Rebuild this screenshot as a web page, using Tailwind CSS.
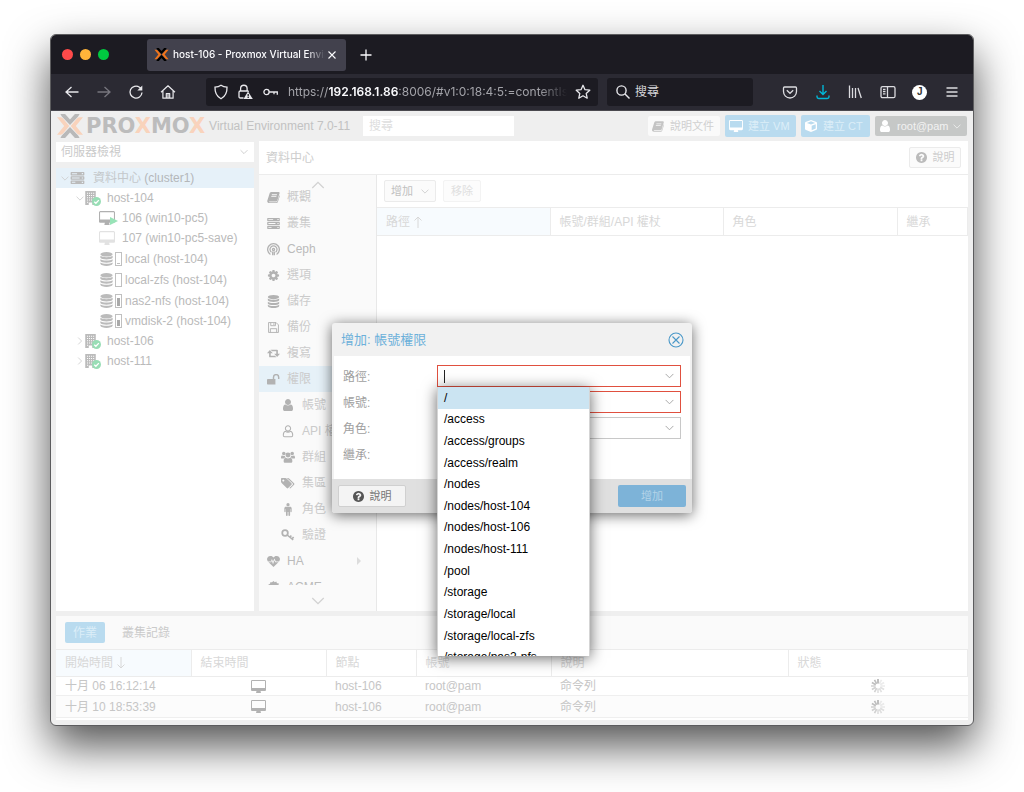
<!DOCTYPE html>
<html lang="zh-Hant">
<head>
<meta charset="utf-8">
<title>host-106 - Proxmox Virtual Environment</title>
<meta name="viewport" content="width=device-width, initial-scale=1">
<script src="https://cdn.jsdelivr.net/npm/@tailwindcss/browser@4"></script>
</head>
<body class="flex h-screen flex-col overflow-hidden bg-white px-[50px] pt-[34px] pb-[66px] font-['Liberation_Sans','Noto_Sans_CJK_TC',sans-serif] text-xs text-[#b8b8b8]">

<svg class="hidden" aria-hidden="true">
  <symbol id="user" viewBox="0 0 1792 1792"><path d="M1536 1399q0 109-62.5 187t-150.5 78h-854q-88 0-150.5-78t-62.5-187q0-85 8.5-160.5t31.5-152 58.5-131 94-89 134.5-34.5q131 128 313 128t313-128q76 0 134.5 34.5t94 89 58.5 131 31.5 152 8.5 160.5zm-256-887q0 159-112.5 271.5t-271.5 112.5-271.5-112.5-112.5-271.5 112.5-271.5 271.5-112.5 271.5 112.5 112.5 271.5z"/></symbol>
  <symbol id="usero" viewBox="0 0 1792 1792"><path fill="none" stroke="currentColor" stroke-width="130" d="M1500 1440q0 200-170 200h-868q-170 0-170-200q0-420 290-500q130 100 314 100t314-100q290 80 290 500zM1230 560q0 140-97 237t-237 97-237-97-97-237 97-237 237-97 237 97 97 237z"/></symbol>
  <symbol id="cog" viewBox="0 0 1792 1792"><path d="M1152 896q0-106-75-181t-181-75-181 75-75 181 75 181 181 75 181-75 75-181zm512-109v222q0 12-8 23t-20 13l-185 28q-19 54-39 91 35 50 107 138 10 12 10 25t-9 23q-27 37-99 108t-94 71q-12 0-26-9l-138-108q-44 23-91 38-16 136-29 186-7 28-36 28h-222q-14 0-24.500-8.500t-11.500-21.500l-28-184q-49-16-90-37l-141 107q-10 9-25 9-14 0-25-11-126-114-165-168-7-10-7-23 0-12 8-23 15-21 51-66.500t54-70.500q-27-50-41-99l-183-27q-13-2-21-12.500t-8-23.500v-222q0-12 8-23t19-13l186-28q14-46 39-92-40-57-107-138-10-12-10-24 0-10 9-23 26-36 98.500-107.500t94.500-71.500q13 0 26 10l138 107q44-23 91-38 16-136 29-186 7-28 36-28h222q14 0 24.500 8.500t11.500 21.500l28 184q49 16 90 37l142-107q9-9 24-9 13 0 25 10 129 119 165 170 7 8 7 22 0 12-8 23-15 21-51 66.500t-54 70.500q26 50 41 98l183 28q13 2 21 12.500t8 23.500z"/></symbol>
  <symbol id="desktop" viewBox="-64 0 1920 1664"><path d="M1728 992v-832q0-13-9.500-22.500t-22.500-9.500h-1600q-13 0-22.500 9.500t-9.500 22.500v832q0 13 9.500 22.500t22.500 9.500h1600q13 0 22.500-9.500t9.500-22.500zm128-832v1088q0 66-47 113t-113 47h-544q0 37 16 77.500t32 71 16 43.500q0 26-19 45t-45 19h-512q-26 0-45-19t-19-45q0-14 16-44t32-70 16-78h-544q-66 0-113-47t-47-113v-1088q0-66 47-113t113-47h1600q66 0 113 47t47 113z"/></symbol>
  <symbol id="help" viewBox="128 128 1536 1536"><path d="M1024 1376v-192q0-14-9-23t-23-9h-192q-14 0-23 9t-9 23v192q0 14 9 23t23 9h192q14 0 23-9t9-23zm256-672q0-88-55.500-163t-138.500-116-170-41q-243 0-371 213-15 24 8 42l132 100q7 6 19 6 16 0 25-12 53-68 86-92 34-24 86-24 48 0 85.500 26t37.500 59q0 38-20 61t-68 45q-63 28-115.500 86.500t-52.500 125.500v36q0 14 9 23t23 9h192q14 0 23-9t9-23q0-19 21.500-49.500t54.500-49.500q32-18 49-28.500t46-35 44.500-48 28-60.500 12.500-81zm384 192q0 209-103 385.500t-279.500 279.500-385.500 103-385.500-103-279.500-279.500-103-385.500 103-385.500 279.500-279.500 385.500-103 385.500 103 279.500 279.500 103 385.500z"/></symbol>
  <symbol id="server" viewBox="0 0 16 14"><path fill-rule="evenodd" d="M.5 0h15l.5.5v3l-.5.5H.5L0 3.500v-3zM.5 5h15l.5.5v3l-.5.5H.5L0 8.500v-3zM.5 10h15l.5.5v3l-.5.5H.5l-.5-.5v-3zM1.500 1.500v1h6v-1zM1.500 6.500v1h9v-1zM1.500 11.500v1h4v-1zM13 1.300v1.400h1.500V1.300zM13 6.300v1.400h1.500V6.300zM13 11.300v1.400h1.500v-1.400z"/></symbol>
  <symbol id="building" viewBox="0 0 14 16"><path fill-rule="evenodd" d="M1 0h12v16H9v-3H5v3H1zM3 2v1h1.200V2zM5.300 2v1h1.200V2zM7.600 2v1h1.200V2zM10 2v1h1.200V2zM3 4.600v1h1.200v-1zM5.300 4.600v1h1.200v-1zM7.600 4.600v1h1.200v-1zM10 4.600v1h1.200v-1zM3 7.200v1h1.200v-1zM5.300 7.200v1h1.200v-1zM7.600 7.200v1h1.200v-1zM10 7.200v1h1.200v-1zM3 9.800v1h1.200v-1zM5.300 9.800v1h1.200v-1zM7.600 9.800v1h1.200v-1zM3 12.400v1h1.200v-1z"/></symbol>
  <symbol id="check" viewBox="0 0 10 10"><circle cx="5" cy="5" r="5"/><path d="M2.500 5.200 4.300 7l3.300-3.600" fill="none" stroke="#fff" stroke-width="1.400"/></symbol>
  <symbol id="db" viewBox="0 0 14 16"><ellipse cx="7" cy="2.600" rx="7" ry="2.600"/><path d="M0 4.400c2 2 12 2 14 0v2.200c-1 2.600-13 2.600-14 0zM0 8.200c2 2 12 2 14 0v2.200c-1 2.600-13 2.600-14 0zM0 12c2 2 12 2 14 0v1.500c-1 3.300-13 3.300-14 0z"/></symbol>
  <symbol id="book" viewBox="0 0 16 14"><path fill-rule="evenodd" d="M5.500 0h9c1 0 1.500.7 1.200 1.600L12.800 11c-.2.700-.8 1-1.500 1H3c-.8 0-.8.9 0 .9h8.800c.7 0 1-.3 1.200-1L15.600 4c.5.300.5.800.3 1.400l-2.300 7.400c-.3.800-1 1.200-1.800 1.200H2.500C.8 14-.4 12.400.2 10.800L3 1.800C3.400.7 4.300 0 5.500 0zM6 3l-.3 1h6.500l.3-1zM5.300 5.400l-.3 1h6.500l.3-1z"/></symbol>
  <symbol id="ceph" viewBox="0 0 16 16"><g fill="none" stroke="currentColor" stroke-width="1.600"><path d="M4.200 14.200A7.200 7.200 0 1 1 11.800 14.200M5.500 11.400A4.300 4.300 0 1 1 10.500 11.400"/><circle cx="8" cy="8" r="1.300"/><path d="M7 10.500v4.700M9 10.500v4.700"/></g></symbol>
  <symbol id="floppy" viewBox="0 0 14 14"><path fill="none" stroke="currentColor" stroke-width="1.200" d="M.7.700h9.600l3 3v9.600H.7zM3.500.7v4h6v-4M3 13.300V8.500h8v4.800M7.500 1.500v2.300"/></symbol>
  <symbol id="retweet" viewBox="0 0 18 12"><path d="M4 1 8 5.500H5.200V9H11l2 2.300H4.200c-.8 0-1.300-.4-1.300-1.200V5.500H0zM14 11l-4-4.500h2.800V3H7L5 .7h8.800c.8 0 1.300.4 1.300 1.200v4.600H18z"/></symbol>
  <symbol id="unlock" viewBox="0 0 17 14"><path d="M1 6.500h10v7.200H1c-.6 0-1-.4-1-1V7.500c0-.6.400-1 1-1z"/><path d="M8.500 7V4a3.200 3.200 0 0 1 6.800 0v2.500" fill="none" stroke="currentColor" stroke-width="1.900"/></symbol>
  <symbol id="users" viewBox="0 0 18 15"><circle cx="3.600" cy="3" r="2.300"/><circle cx="14.400" cy="3" r="2.300"/><circle cx="9" cy="5" r="3.200"/><path d="M1.300 5.500Q3 6.400 5 6q.2 1.600 1 2.300Q4 8.600 3.600 9.500H1.200C0 9.500 0 8.800 0 8s.4-2.500 1.300-2.500zM16.700 5.500Q15 6.400 13 6q-.2 1.600-1 2.300 2 .3 2.400 1.200h2.400C18 9.500 18 8.800 18 8s-.4-2.500-1.300-2.500zM6.300 8.600q2.700 1.400 5.400 0c2 0 2.900 2 2.900 4.400 0 1.300-.8 2-1.900 2H5.300c-1.100 0-1.900-.7-1.900-2 0-2.400.9-4.400 2.900-4.400z"/></symbol>
  <symbol id="tags" viewBox="0 0 18 14"><path fill-rule="evenodd" d="M1 0h4.500c.8 0 1.400.3 2 .8l6 6c.6.600.6 1.200 0 1.800l-4.300 4.300c-.6.600-1.200.6-1.800 0l-6-6C.6 6 0 5.400 0 4.600V1c0-.6.400-1 1-1zM3 1.800a1.300 1.300 0 1 0 .01 0z"/><path d="M7.500 0h1.300c.8 0 1.500.3 2 .8l6 6c.7.600.7 1.200 0 1.800l-4.200 4.300c-.7.600-1.300.5-1.800 0l4-4c.8-.8.800-1.500 0-2.300z"/></symbol>
  <symbol id="male" viewBox="0 0 10 16"><circle cx="5" cy="2" r="2"/><path d="M2.500 4.500h5c1.300 0 2 .8 2 2v4c0 1-1.500 1-1.500 0v-3h-.4v7.600c0 1.100-2.100 1.100-2.100 0V11h-.9v4.100c0 1.100-2.100 1.100-2.100 0V7.500h-.4v3c0 1-1.600 1-1.600 0v-4c0-1.200.7-2 2-2z"/></symbol>
  <symbol id="key" viewBox="0 0 17 15"><g fill="none" stroke="currentColor"><circle cx="4.800" cy="5" r="3.500" stroke-width="2.200"/><path stroke-width="2" d="m7.500 7.500 7.500 6M11 10.500l1.600-2.300M13.500 12.500l2-2.600"/></g></symbol>
  <symbol id="heart" viewBox="0 0 18 16"><path d="M9 16 1.800 9h4l.8-2 1.700 5 2-6 1.200 3h4.700zM.9 8A4.800 4.800 0 0 1 4.800 0C6.700 0 8 1 9 2.200 10 1 11.300 0 13.200 0A4.800 4.800 0 0 1 17.100 8h-4.800l-2-4.500-2 5L6.700 4.200 5.200 8z"/></symbol>
  <symbol id="cert" viewBox="0 0 16 16"><path d="m8 0 1.700 1.500L11.800.7l.8 2.200 2.300.2-.1 2.300L16.500 7 15 8.800l.7 2.200-2.200.8-.3 2.300-2.300-.1L9 15.700 7.200 14l-2.200.8-.8-2.200-2.300-.3.200-2.300L.3 8.500 2 6.800 1.200 4.600l2.200-.8.300-2.300 2.300.2z"/></symbol>
  <symbol id="cube" viewBox="0 0 16 16"><path fill-rule="evenodd" d="M8 0l7.300 2.800.7 1V12l-.6 1L8 16 .6 13 0 12V3.800l.7-1zm0 1.700L2.500 3.900 8 6l5.500-2.100zM8.900 7.500v6.300l5.400-2.400V5.500z"/></symbol>
  <symbol id="down" viewBox="0 0 10 6"><path d="m.7.700 4.300 4.300L9.300.7" fill="none" stroke="currentColor"/></symbol>
  <symbol id="right" viewBox="0 0 6 10"><path d="m.7.700 4.300 4.300L.7 9.300" fill="none" stroke="currentColor"/></symbol>
  <symbol id="mark" viewBox="0 0 26 24"><g fill="currentColor"><path d="M3.500 0h4.600L13 5.400 17.900 0h4.600c-.5 1.400-1.200 2.300-2.300 3.500L13 11 5.800 3.500C4.700 2.300 4 1.400 3.500 0zM3.500 24h4.600l4.900-5.400 4.900 5.400h4.600c-.5-1.400-1.200-2.300-2.300-3.500L13 13l-7.200 7.500c-1.100 1.200-1.800 2.100-2.300 3.500z"/></g><path fill="var(--x)" d="M0 3.300h2.700c1.500 0 2.400.4 3.300 1.300L12.300 12 6 19.400c-.9.900-1.800 1.300-3.300 1.300H0L7.200 12zM26 3.300h-2.700c-1.500 0-2.400.4-3.300 1.300L13.700 12l6.300 7.400c.9.900 1.800 1.300 3.300 1.300H26L18.800 12z"/></symbol>
  <symbol id="spin" viewBox="0 0 14 14"><g fill="none" stroke="#b4b4b4" stroke-width="1.700"><path d="M7 0v4.500"/><path opacity=".25" d="M10.500.9 8.300 4.800M13.100 3.500 9.200 5.700M14 7H9.500"/><path opacity=".4" d="m13.100 10.500-3.900-2.200M10.500 13.100 8.300 9.200M7 14V9.500"/><path opacity=".6" d="m3.500 13.100 2.200-3.900M.9 10.500l3.900-2.200M0 7h4.500"/><path opacity=".85" d="m.9 3.500 3.900 2.200M3.500.9l2.200 3.900"/></g></symbol>
</svg>

<div class="flex min-h-0 flex-1 flex-col overflow-hidden rounded-md border border-[#5c5c5e] bg-[#efefef] shadow-[0_20px_44px_rgba(0,0,0,0.68)]">

  <!-- Tab strip -->
  <div class="flex h-[39px] shrink-0 items-center bg-[#1c1b22] text-[#fbfbfe]">
    <div class="flex w-24 gap-[7px] pl-[11px]">
      <button aria-label="關閉" class="size-[11px] rounded-full bg-[#ff4a4a]"></button>
      <button aria-label="最小化" class="size-[11px] rounded-full bg-[#ffb43a]"></button>
      <button aria-label="最大化" class="size-[11px] rounded-full bg-[#00c940]"></button>
    </div>
    <div class="flex h-8 w-[199px] items-center rounded-[3px] bg-[#42414d] pr-2 pl-[7px]">
      <svg class="h-[13px] w-[15px] shrink-0 text-black [--x:#f0741a]"><use href="#mark"/></svg>
      <span class="ml-1 flex-1 overflow-hidden font-['Inter','Noto_Sans_CJK_TC',sans-serif] text-[10px] font-medium whitespace-nowrap [mask-image:linear-gradient(to_right,black_88%,transparent)]">host-106 - Proxmox Virtual Environment</span>
      <button aria-label="關閉分頁" class="ml-px flex size-3 items-center justify-center"><svg class="size-2" viewBox="0 0 8 8"><path d="m.5.500 7 7m0-7-7 7" stroke="currentColor" stroke-width="1.100"/></svg></button>
    </div>
    <button aria-label="新分頁" class="ml-3 flex size-4 items-center justify-center"><svg class="size-3" viewBox="0 0 12 12"><path d="M6 .5v11M.5 6h11" stroke="currentColor" stroke-width="1.300"/></svg></button>
  </div>

  <!-- Navigation toolbar -->
  <div class="flex h-[37px] shrink-0 items-center border-b border-[#4a494f] bg-[#2b2a33] px-3 text-[#e8e8ec]">
    <div class="flex w-[143px] items-center gap-4 pl-px">
      <button aria-label="上一頁"><svg class="size-4" viewBox="0 0 16 16" fill="none" stroke="currentColor" stroke-width="1.300"><path d="M14.500 8H2m5.500-5L2 8l5.500 5"/></svg></button>
      <button aria-label="下一頁" class="text-[#77767e]"><svg class="size-4" viewBox="0 0 16 16" fill="none" stroke="currentColor" stroke-width="1.300"><path d="M1.500 8H14M8.500 3 14 8l-5.500 5"/></svg></button>
      <button aria-label="重新載入"><svg class="size-4" viewBox="0 0 16 16" fill="none" stroke="currentColor" stroke-width="1.300"><path d="M14 8.500A6 6 0 1 1 11.500 3.200L13 4.600"/><path d="M14.300 1.500v5h-5z" fill="currentColor" stroke="none"/></svg></button>
      <button aria-label="首頁"><svg class="size-4" viewBox="0 0 16 16" fill="none" stroke="currentColor" stroke-width="1.200" stroke-linejoin="round"><path d="m1 8.200 7-6.400 7 6.400M2.900 6.800v7.400h10.200V6.800M6.300 14v-4.500h3.400V14M8 9.500V14"/></svg></button>
    </div>
    <div class="flex h-7 min-w-0 flex-1 items-center rounded-[3px] bg-[#1c1b22] px-[7px]">
      <svg class="size-4 shrink-0" viewBox="0 0 16 16" fill="none" stroke="currentColor" stroke-width="1.300"><path d="M8 1.300c1.700 1.200 3.700 1.800 6 1.900.2 5-1.500 9-6 11.500C3.500 12.200 1.800 8.200 2 3.200c2.300-.1 4.300-.7 6-1.900z"/></svg>
      <svg class="ml-2 size-4 shrink-0" viewBox="0 0 16 16" fill="none" stroke="currentColor" stroke-width="1.300"><path d="M6.500 14H3.300c-.8 0-1.300-.5-1.300-1.300V8.300C2 7.500 2.500 7 3.300 7h7.400l1 .6M3.600 7V4.500a3.200 3.200 0 0 1 6.500 0V7"/><path fill="currentColor" stroke="none" d="M11 7.500 15.800 15H6.500z"/><path stroke="#1c1b22" d="M11.200 10v2.500m0 .6v1"/></svg>
      <svg class="mx-[10px] h-2 w-[15px] shrink-0" viewBox="0 0 15 8" fill="none" stroke="currentColor" stroke-width="1.300"><circle cx="3.500" cy="4" r="2.600"/><path d="M6 4h8.300v2.800M11 4v2.200"/></svg>
      <div class="min-w-0 flex-1 overflow-hidden font-['Inter',sans-serif] text-xs whitespace-nowrap text-[#a3a3a9] [mask-image:linear-gradient(to_right,black_90%,transparent)]">https://<b class="font-semibold text-[#fbfbfe]">192.168.1.86</b>:8006/#v1:0:18:4:5:=contentIso</div>
      <button aria-label="加入書籤" class="ml-2 shrink-0"><svg class="size-4" viewBox="0 0 16 16" fill="none" stroke="currentColor" stroke-width="1.300" stroke-linejoin="round"><path d="m8 1.300 2 4.400 4.800.5-3.600 3.200 1 4.800L8 11.800l-4.200 2.400 1-4.800L1.200 6.200 6 5.700z"/></svg></button>
    </div>
    <label class="ml-[9px] flex h-7 w-[146px] items-center gap-1 rounded-[3px] bg-[#1c1b22] px-2">
      <svg class="size-4 shrink-0" viewBox="0 0 16 16" fill="none" stroke="currentColor" stroke-width="1.400"><circle cx="6.500" cy="6.500" r="4.600"/><path d="m10 10 4.500 4.500"/></svg>
      <input aria-label="搜尋網頁" placeholder="搜尋" class="w-full min-w-0 bg-transparent text-xs outline-none placeholder:text-[#d5d5d9]">
    </label>
    <div class="flex w-[208px] items-center justify-between pr-px pl-[29px] text-[#dcdce0]">
      <button aria-label="Pocket"><svg class="size-4" viewBox="0 0 16 16" fill="none" stroke="currentColor" stroke-width="1.300"><path d="M2.500 3h11c.6 0 1 .4 1 1v3.500a6.500 6.500 0 0 1-13 0V4c0-.6.400-1 1-1z"/><path d="m4.800 6.300 3.200 3 3.200-3"/></svg></button>
      <button aria-label="下載" class="text-[#00b8d8]"><svg class="size-4" viewBox="0 0 16 16" fill="none" stroke="currentColor" stroke-width="1.400"><path d="M8 1v9.500M4.500 7 8 10.500 11.500 7M2 11.500v1.300c0 1 .7 1.700 1.700 1.700h8.600c1 0 1.700-.7 1.700-1.700v-1.300"/></svg></button>
      <button aria-label="我的書庫"><svg class="size-4" viewBox="0 0 16 16" fill="none" stroke="currentColor" stroke-width="1.300"><path d="M2.500 1.500V14M5.500 4v10M8.500 4v10M11 4l3.300 10"/></svg></button>
      <button aria-label="側邊欄"><svg class="size-4" viewBox="0 0 16 16" fill="none" stroke="currentColor" stroke-width="1.300"><rect x="1" y="2.700" width="14" height="11" rx="1.500"/><path d="M7.500 3v10.500M3 5.500h2.500M3 7.700h2.500M3 9.900h2.500"/></svg></button>
      <button aria-label="帳戶" class="flex size-[15px] items-center justify-center rounded-full bg-white text-[10px] font-bold text-[#333]">J</button>
      <button aria-label="選單"><svg class="size-4" viewBox="0 0 16 16" stroke="currentColor" stroke-width="1.300"><path d="M2.500 4h11M2.500 8h11M2.500 12h11"/></svg></button>
    </div>
  </div>

  <!-- Application -->
  <div class="relative flex min-h-0 flex-1 flex-col px-[5px] pb-[5px]">
    <header class="flex h-[30px] shrink-0 items-center">
      <svg class="mr-[3px] ml-px h-6 w-[26px] shrink-0 text-[#b9b9b9] [--x:#f9d3bc]"><use href="#mark"/></svg>
      <span class="font-['DejaVu_Sans',sans-serif] text-[21px] leading-6 font-bold text-[#bcbcbc]">PRO<span class="text-[#f9d3bc]">X</span>MO<span class="text-[#f9d3bc]">X</span></span>
      <span class="ml-1 w-[154px] text-xs whitespace-nowrap text-[#c2c2c2]">Virtual Environment 7.0-11</span>
      <input aria-label="搜尋" placeholder="搜尋" class="h-5 w-[151px] bg-white px-[6px] outline-none placeholder:text-[#dedede]">
      <div class="ml-auto flex items-center gap-[5px] pr-px text-[11px]">
        <button class="flex h-5 w-[72px] items-center gap-[6px] rounded-[2px] bg-[#fafafa] px-1 whitespace-nowrap text-[#d0d0d0]"><svg class="h-[11px] w-3 shrink-0 fill-[#c4c4c4]"><use href="#book"/></svg>說明文件</button>
        <button class="flex h-[22px] w-[71px] items-center gap-[5px] rounded-[2px] bg-[#b9dbef] px-1 whitespace-nowrap text-[#dceef8]"><svg class="h-3 w-[14px] shrink-0 fill-white"><use href="#desktop"/></svg>建立 VM</button>
        <button class="flex h-[22px] w-[69px] items-center gap-[6px] rounded-[2px] bg-[#b9dbef] px-1 whitespace-nowrap text-[#dceef8]"><svg class="size-3 shrink-0 fill-white"><use href="#cube"/></svg>建立 CT</button>
        <button class="flex h-5 w-[92px] items-center rounded-[2px] bg-[#c6c8c7] px-[3px] pr-[6px] whitespace-nowrap text-[#f2f2f2]"><svg class="mr-[5px] size-[14px] shrink-0 fill-white"><use href="#user"/></svg>root@pam<svg class="ml-auto h-[5px] w-2 shrink-0"><use href="#down"/></svg></button>
      </div>
    </header>

    <div class="flex min-h-0 flex-1 gap-[5px]">
      <!-- Resource tree -->
      <aside class="flex w-[198px] shrink-0 flex-col gap-[6px] pt-px">
        <div class="relative h-5 shrink-0 bg-white">
          <select aria-label="檢視" class="size-full appearance-none bg-transparent pl-[5px] text-[#cacaca] outline-none"><option>伺服器檢視</option></select>
          <svg class="pointer-events-none absolute top-[7px] right-[6px] h-[6px] w-2 text-[#c4c4c4]"><use href="#down"/></svg>
        </div>
        <ul class="flex-1 overflow-hidden bg-white text-[#bababa]" role="tree">
          <li class="flex h-5 items-center bg-[#e6f1f9] pl-[5px]"><svg class="h-[5px] w-2 text-[#ccc]"><use href="#down"/></svg><svg class="mr-2 ml-px h-3 w-[15px] fill-[#bbb]"><use href="#server"/></svg><span class="text-[#c4c8cb]">資料中心 <span class="text-[#b4b7b9]">(cluster1)</span></span></li>
          <li class="flex h-5 items-center pl-5"><svg class="h-[5px] w-2 text-[#ccc]"><use href="#down"/></svg><span class="relative mr-[6px] h-[14px] w-[17px]"><svg class="h-[14px] w-[13px] fill-[#bbb]"><use href="#building"/></svg><svg class="absolute right-0 -bottom-px size-[9px] fill-[#98ddb5]"><use href="#check"/></svg></span>host-104</li>
          <li class="flex h-5 items-center pl-[43px]"><span class="relative mr-[5px] h-[14px] w-[18px]"><svg class="h-[14px] w-4 fill-[#b0b0b0]"><use href="#desktop"/></svg><svg class="absolute right-[-1px] bottom-0 size-2" viewBox="0 0 8 8"><path d="m0 0 8 4-8 4z" fill="#98e3b7"/></svg></span>106 (win10-pc5)</li>
          <li class="flex h-5 items-center pl-[43px]"><svg class="mr-[7px] h-[14px] w-4 fill-[#e2e2e2]"><use href="#desktop"/></svg>107 (win10-pc5-save)</li>
          <li class="flex h-[21px] items-center pl-[44px]"><svg class="h-[14px] w-[13px] fill-[#bbb]"><use href="#db"/></svg><span class="mr-[3px] ml-[2px] flex h-[14px] w-[7px] items-end border border-[#c0c0c0] p-px"><i class="h-px w-full bg-[#c0c0c0]"></i></span>local (host-104)</li>
          <li class="flex h-[21px] items-center pl-[44px]"><svg class="h-[14px] w-[13px] fill-[#bbb]"><use href="#db"/></svg><span class="mr-[3px] ml-[2px] h-[14px] w-[7px] border border-[#c0c0c0]"></span>local-zfs (host-104)</li>
          <li class="flex h-[21px] items-center pl-[44px]"><svg class="h-[14px] w-[13px] fill-[#bbb]"><use href="#db"/></svg><span class="mr-[3px] ml-[2px] flex h-[14px] w-[7px] items-end border border-[#c0c0c0] p-px"><i class="h-2 w-full bg-[#aaa]"></i></span>nas2-nfs (host-104)</li>
          <li class="flex h-5 items-center pl-[44px]"><svg class="h-[14px] w-[13px] fill-[#bbb]"><use href="#db"/></svg><span class="mr-[3px] ml-[2px] flex h-[14px] w-[7px] items-end border border-[#c0c0c0] p-px"><i class="h-[6px] w-full bg-[#aaa]"></i></span>vmdisk-2 (host-104)</li>
          <li class="flex h-5 items-center pl-5"><svg class="mr-px ml-px h-2 w-[6px] text-[#ccc]"><use href="#right"/></svg><span class="relative mr-[6px] h-[14px] w-[17px]"><svg class="h-[14px] w-[13px] fill-[#bbb]"><use href="#building"/></svg><svg class="absolute right-0 -bottom-px size-[9px] fill-[#98ddb5]"><use href="#check"/></svg></span>host-106</li>
          <li class="flex h-5 items-center pl-5"><svg class="mr-px ml-px h-2 w-[6px] text-[#ccc]"><use href="#right"/></svg><span class="relative mr-[6px] h-[14px] w-[17px]"><svg class="h-[14px] w-[13px] fill-[#bbb]"><use href="#building"/></svg><svg class="absolute right-0 -bottom-px size-[9px] fill-[#98ddb5]"><use href="#check"/></svg></span>host-111</li>
        </ul>
      </aside>

      <!-- Content -->
      <section class="flex min-w-0 flex-1 flex-col bg-white">
        <div class="flex h-[34px] shrink-0 items-center justify-between border-b border-[#ececec] pr-[7px] pl-[7px] text-[#cdcdcd]">
          <h1>資料中心</h1>
          <button class="flex h-[21px] w-[52px] items-center justify-center gap-[6px] rounded-[2px] border border-[#ebebeb] bg-[#fbfbfb] text-[11px]"><svg class="size-[11px] fill-[#bbb]"><use href="#help"/></svg>說明</button>
        </div>
        <div class="flex min-h-0 flex-1">
          <nav class="flex w-[118px] shrink-0 flex-col border-r border-[#e8e8e8] bg-[#fafafa]">
            <div class="relative h-[9px] shrink-0"><svg class="absolute top-[6px] left-[52px] h-2 w-[14px] rotate-180 text-[#d2d2d2]"><use href="#down"/></svg></div>
            <div class="min-h-0 flex-1 overflow-hidden text-[#cbcbcb]">
              <a href="#" class="flex h-[26px] items-center gap-[7px] pl-2"><svg class="h-[11px] w-[13px] fill-[#b2b2b2]"><use href="#book"/></svg>概觀</a>
              <a href="#" class="flex h-[26px] items-center gap-[7px] pl-2"><svg class="h-[11px] w-[13px] fill-[#b2b2b2]"><use href="#server"/></svg>叢集</a>
              <a href="#" class="flex h-[26px] items-center gap-[7px] pl-2 text-[#bbb]"><svg class="size-[13px] fill-none text-[#b2b2b2]"><use href="#ceph"/></svg>Ceph</a>
              <a href="#" class="flex h-[26px] items-center gap-[7px] pl-2"><svg class="size-[13px] fill-[#b2b2b2]"><use href="#cog"/></svg>選項</a>
              <a href="#" class="flex h-[26px] items-center gap-[7px] pl-2"><svg class="h-[13px] w-[13px] fill-[#b2b2b2]"><use href="#db"/></svg>儲存</a>
              <a href="#" class="flex h-[26px] items-center gap-[7px] pl-2"><svg class="h-[11px] w-[13px] text-[#b2b2b2]"><use href="#floppy"/></svg>備份</a>
              <a href="#" class="flex h-[26px] items-center gap-[7px] pl-2"><svg class="h-[9px] w-[13px] fill-[#b2b2b2]"><use href="#retweet"/></svg>複寫</a>
              <a href="#" class="flex h-[26px] items-center gap-[7px] bg-[#e6f1f8] pl-2"><svg class="h-[11px] w-[13px] fill-[#b2b2b2] text-[#b2b2b2]"><use href="#unlock"/></svg>權限</a>
              <a href="#" class="flex h-[26px] items-center gap-[7px] pl-[22px]"><svg class="size-[14px] fill-[#b2b2b2]"><use href="#user"/></svg>帳號</a>
              <a href="#" class="flex h-[26px] items-center gap-[7px] pl-[22px] whitespace-nowrap"><svg class="size-[14px] text-[#b2b2b2]"><use href="#usero"/></svg>API 權杖</a>
              <a href="#" class="flex h-[26px] items-center gap-[7px] pl-[22px]"><svg class="h-3 w-[14px] fill-[#b2b2b2]"><use href="#users"/></svg>群組</a>
              <a href="#" class="flex h-[26px] items-center gap-[7px] pl-[22px]"><svg class="h-[11px] w-[14px] fill-[#b2b2b2]"><use href="#tags"/></svg>集區</a>
              <a href="#" class="flex h-[26px] items-center gap-[7px] pl-[22px]"><svg class="h-[13px] w-[14px] fill-[#b2b2b2]"><use href="#male"/></svg>角色</a>
              <a href="#" class="flex h-[26px] items-center gap-[7px] pl-[22px]"><svg class="h-3 w-[14px] text-[#b2b2b2]"><use href="#key"/></svg>驗證</a>
              <a href="#" class="flex h-[26px] items-center gap-[7px] pr-[15px] pl-2 text-[#bbb]"><svg class="h-[11px] w-[13px] fill-[#b2b2b2]"><use href="#heart"/></svg>HA<svg class="ml-auto h-2 w-1 fill-[#dcdcdc]" viewBox="0 0 4 8"><path d="m0 0 4 4-4 4z"/></svg></a>
              <a href="#" class="flex h-[26px] items-center gap-[7px] pl-2 text-[#bbb]"><svg class="h-3 w-[13px] fill-[#b2b2b2]"><use href="#cert"/></svg>ACME</a>
            </div>
            <div class="flex h-[26px] shrink-0 items-center justify-center pt-[6px]"><svg class="h-2 w-[14px] text-[#d2d2d2]"><use href="#down"/></svg></div>
          </nav>
          <div class="min-w-0 flex-1">
            <div class="flex h-8 items-center gap-[7px] pl-[7px]">
              <button class="flex h-[22px] w-[52px] items-center justify-center gap-2 rounded-[2px] border border-[#ebebeb] bg-[#fbfbfb] text-[11px] text-[#c0c0c0]">增加<svg class="h-[5px] w-2 text-[#c8c8c8]"><use href="#down"/></svg></button>
              <button disabled class="h-[22px] rounded-[2px] border border-[#f3f3f3] bg-[#fcfcfc] px-[7px] text-[11px] text-[#e0e0e0]">移除</button>
            </div>
            <table class="w-full table-fixed text-left text-[#d8d8d8]">
              <colgroup><col class="w-[173px]"><col class="w-[173px]"><col class="w-[174px]"><col></colgroup>
              <thead><tr class="h-7 border-y border-[#ececec]">
                <th class="border-r border-[#ececec] bg-[#f7fbfe] pl-[9px] font-normal"><span class="flex items-center gap-1">路徑<svg class="h-3 w-2" viewBox="0 0 8 12" fill="none" stroke="currentColor"><path d="M4 12V1M.5 4.500 4 1l3.500 3.500"/></svg></span></th>
                <th class="border-r border-[#ececec] pl-[9px] font-normal">帳號/群組/API 權杖</th>
                <th class="border-r border-[#ececec] pl-[9px] font-normal">角色</th>
                <th class="border-r border-[#ececec] pl-[9px] font-normal">繼承</th>
              </tr></thead>
            </table>
          </div>
        </div>
      </section>
    </div>

    <!-- Task log -->
    <section class="mt-[5px] h-[104px] shrink-0 bg-white">
      <div class="flex h-[33px] items-center gap-[9px] bg-[#fafafa] pl-[9px]">
        <button class="h-[21px] rounded-[2px] bg-[#b9dbef] px-2 text-[#dceef8]">作業</button>
        <button class="h-[21px] px-2 text-[#cacaca]">叢集記錄</button>
      </div>
      <table class="w-full table-fixed text-left text-[#c6c6c6]">
        <colgroup><col class="w-[135px]"><col class="w-[135px]"><col class="w-[90px]"><col class="w-[135px]"><col class="w-[237px]"><col></colgroup>
        <thead><tr class="h-[27px] border-y border-[#ececec] text-[#d8d8d8]">
          <th class="border-r border-[#ececec] bg-[#f7fbfe] pl-[9px] font-normal"><span class="flex items-center gap-1">開始時間<svg class="h-3 w-2" viewBox="0 0 8 12" fill="none" stroke="currentColor"><path d="M4 0v11M.5 7.500 4 11l3.500-3.500"/></svg></span></th>
          <th class="border-r border-[#ececec] pl-[9px] font-normal">結束時間</th>
          <th class="border-r border-[#ececec] pl-[9px] font-normal">節點</th>
          <th class="border-r border-[#ececec] pl-[9px] font-normal">帳號</th>
          <th class="border-r border-[#ececec] pl-[9px] font-normal">說明</th>
          <th class="border-r border-[#ececec] pl-[9px] font-normal">狀態</th>
        </tr></thead>
        <tbody>
          <tr class="h-[19px] border-b border-[#efefef] leading-4">
            <td class="pl-[9px]">十月 06 16:12:14</td>
            <td><svg class="mx-auto h-[13px] w-[15px] fill-[#b2b2b2]"><use href="#desktop"/></svg></td>
            <td class="pl-[9px]">host-106</td><td class="pl-[9px]">root@pam</td><td class="pl-[9px]">命令列</td>
            <td><svg class="mx-auto size-[14px]"><use href="#spin"/></svg></td>
          </tr>
          <tr class="h-[22px] border-b border-[#efefef] bg-[#fcfcfc] leading-4">
            <td class="pl-[9px]">十月 10 18:53:39</td>
            <td><svg class="mx-auto h-[13px] w-[15px] fill-[#b2b2b2]"><use href="#desktop"/></svg></td>
            <td class="pl-[9px]">host-106</td><td class="pl-[9px]">root@pam</td><td class="pl-[9px]">命令列</td>
            <td><svg class="mx-auto size-[14px]"><use href="#spin"/></svg></td>
          </tr>
        </tbody>
      </table>
    </section>

    <!-- Permission dialog -->
    <div class="absolute inset-0 flex items-center justify-center">
      <form role="dialog" aria-labelledby="dlg" class="w-[360px] rounded-[3px] bg-[#f1f1f1] shadow-[0_2px_14px_rgba(0,0,0,0.6)]">
        <div class="flex h-[33px] items-center justify-between px-2 pl-[9px]">
          <h2 id="dlg" class="text-[13px] text-[#6cb0da]">增加: 帳號權限</h2>
          <button type="button" aria-label="關閉" class="text-[#4a98c8]"><svg class="size-4" viewBox="0 0 16 16" fill="none" stroke="currentColor" stroke-width="1.100"><circle cx="8" cy="8" r="7"/><path d="m4.500 4.500 7 7m0-7-7 7"/></svg></button>
        </div>
        <div class="mx-[2px] flex h-[123px] flex-col gap-1 bg-white px-[9px] pt-[9px] text-[#a0a0a0]">
          <div class="flex h-[22px] items-center">
            <label for="path" class="w-[94px] pt-[2px]">路徑:</label>
            <div class="relative h-full flex-1">
              <div class="flex h-full items-center border border-[#e0503f] bg-white pr-[6px] pl-[6px]">
                <span class="h-[13px] w-px bg-[#222]"></span>
                <input id="path" role="combobox" aria-expanded="true" class="min-w-0 flex-1 text-black outline-none">
                <svg class="h-[6px] w-[9px]"><use href="#down"/></svg>
              </div>
              <div class="absolute top-full left-0 z-10 h-[269px] w-[153px] overflow-hidden border-x border-[#d5d5d5] bg-white shadow-[0_2px_14px_rgba(0,0,0,0.6)]">
                <ul role="listbox" class="grid h-[281px] auto-rows-fr text-black *:flex *:items-center *:pl-[6px]">
                  <li role="option" class="bg-[#cbe4f2]">/</li>
                  <li role="option">/access</li>
                  <li role="option">/access/groups</li>
                  <li role="option">/access/realm</li>
                  <li role="option">/nodes</li>
                  <li role="option">/nodes/host-104</li>
                  <li role="option">/nodes/host-106</li>
                  <li role="option">/nodes/host-111</li>
                  <li role="option">/pool</li>
                  <li role="option">/storage</li>
                  <li role="option">/storage/local</li>
                  <li role="option">/storage/local-zfs</li>
                  <li role="option">/storage/nas2-nfs</li>
                </ul>
              </div>
            </div>
          </div>
          <div class="flex h-[22px] items-center">
            <label for="acct" class="w-[94px] pt-[2px]">帳號:</label>
            <div class="flex h-full flex-1 items-center border border-[#e0503f] pr-[6px]"><input id="acct" role="combobox" aria-expanded="false" class="min-w-0 flex-1 outline-none"><svg class="h-[6px] w-[9px]"><use href="#down"/></svg></div>
          </div>
          <div class="flex h-[22px] items-center">
            <label for="role" class="w-[94px] pt-[2px]">角色:</label>
            <div class="flex h-full flex-1 items-center border border-[#c8c8c8] pr-[6px]"><input id="role" role="combobox" aria-expanded="false" class="min-w-0 flex-1 outline-none"><svg class="h-[6px] w-[9px]"><use href="#down"/></svg></div>
          </div>
          <div class="flex h-[22px] items-center">
            <label for="prop" class="w-[94px] pt-[2px]">繼承:</label>
            <input id="prop" type="checkbox" checked class="size-3">
          </div>
        </div>
        <div class="flex h-[34px] items-center justify-between rounded-b-[3px] bg-[#e0e0e0] px-[6px]">
          <button type="button" class="flex h-[22px] w-[68px] items-center justify-center gap-[6px] rounded-[2px] border border-[#d0d0d0] bg-[#f4f4f4] text-[11px] text-[#777]"><svg class="size-[11px] fill-[#555]"><use href="#help"/></svg>說明</button>
          <button type="submit" class="h-[22px] w-[68px] rounded-[2px] bg-[#7db3d8] text-[11px] text-[#b4d3e8]">增加</button>
        </div>
      </form>
    </div>
  </div>
</div>
</body>
</html>
